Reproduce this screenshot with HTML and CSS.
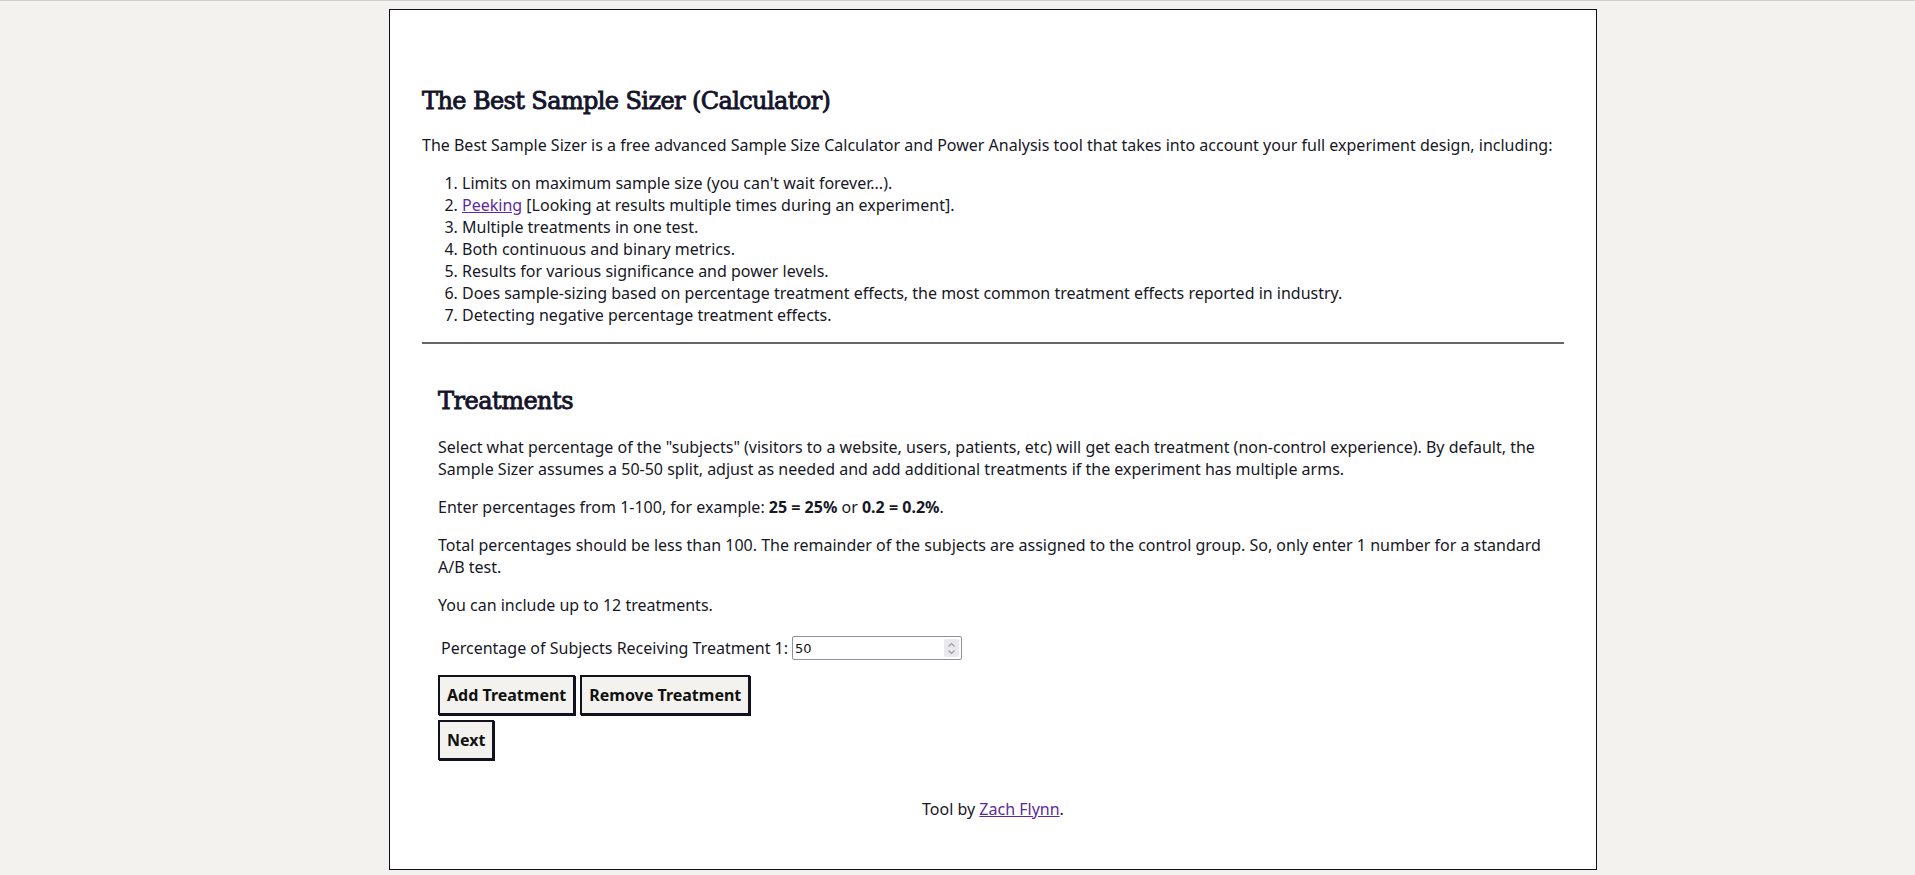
FILE: index.html
```html
<!DOCTYPE html>
<html lang="en">
<head>
<meta charset="utf-8">
<title>The Best Sample Sizer</title>
<link rel="stylesheet" href="styles.css">
</head>
<body>
<main class="page">
  <h1 class="title">The Best Sample Sizer (Calculator)</h1>
  <p class="intro">The Best Sample Sizer is a free advanced Sample Size Calculator and Power Analysis tool that takes into account your full experiment design, including:</p>
  <ol class="features">
    <li>Limits on maximum sample size (you can't wait forever...).</li>
    <li><a href="#" class="link">Peeking</a> [Looking at results multiple times during an experiment].</li>
    <li>Multiple treatments in one test.</li>
    <li>Both continuous and binary metrics.</li>
    <li>Results for various significance and power levels.</li>
    <li>Does sample-sizing based on percentage treatment effects, the most common treatment effects reported in industry.</li>
    <li>Detecting negative percentage treatment effects.</li>
  </ol>
  <hr class="rule">
  <section class="treatments">
    <h2 class="section-title">Treatments</h2>
    <p class="text">Select what percentage of the "subjects" (visitors to a website, users, patients, etc) will get each treatment (non-control experience). By default, the Sample Sizer assumes a 50-50 split, adjust as needed and add additional treatments if the experiment has multiple arms.</p>
    <p class="text">Enter percentages from 1-100, for example: <b>25 = 25%</b> or <b>0.2 = 0.2%</b>.</p>
    <p class="text">Total percentages should be less than 100. The remainder of the subjects are assigned to the control group. So, only enter 1 number for a standard A/B test.</p>
    <p class="text">You can include up to 12 treatments.</p>
    <div class="field">
      <label class="field-label" for="t1">Percentage of Subjects Receiving Treatment 1:</label>
      <span class="num-input">
        <input id="t1" class="num" type="text" value="50">
        <span class="spin">
          <svg width="9" height="13" viewBox="0 0 9 13"><path d="M1.5 4.5 L4.5 1.5 L7.5 4.5" fill="none" stroke="#9a9aa2" stroke-width="1.2"/><path d="M1.5 8.5 L4.5 11.5 L7.5 8.5" fill="none" stroke="#9a9aa2" stroke-width="1.2"/></svg>
        </span>
      </span>
    </div>
    <div class="btn-row">
      <button class="btn">Add Treatment</button>
      <button class="btn">Remove Treatment</button>
    </div>
    <div class="btn-row">
      <button class="btn">Next</button>
    </div>
  </section>
  <p class="footer">Tool by <a href="#" class="link">Zach Flynn</a>.</p>
</main>
</body>
</html>
```

FILE: styles.css
```css
html {
  background: #f3f2ee;
  border-top: 1px solid #d3d1cc;
}
body {
  margin: 8px 0 0 389px;
  font-family: "Noto Sans", "DejaVu Sans", sans-serif;
  font-size: 16px;
  line-height: 22px;
  color: #171726;
}
.page {
  width: 1142px;
  height: 795px;
  background: #fff;
  border: 1px solid #10101c;
  padding: 32px;
}
.title {
  font-family: "DejaVu Serif", serif;
  font-size: 24px;
  line-height: 30px;
  font-weight: 400;
  -webkit-text-stroke: 0.9px #14142a;
  letter-spacing: -0.6px;
  margin: 44px 0 18px;
  color: #14142a;
}
.intro { margin: 0 0 16px; }
.features {
  margin: 0;
  padding-left: 40px;
}
.link { color: #5b2aa0; }
.rule {
  border: 0;
  border-top: 2px solid #666;
  margin: 16px 0 0;
}
.treatments {
  padding: 0 16px;
}
.section-title {
  font-family: "DejaVu Serif", serif;
  font-size: 24px;
  line-height: 30px;
  font-weight: 400;
  -webkit-text-stroke: 0.9px #14142a;
  letter-spacing: -0.5px;
  margin: 42px 0 20px;
  color: #14142a;
}
.text { margin: 0 0 16px; }
.field {
  display: flex;
  align-items: center;
  gap: 4px;
  padding-left: 3px;
  margin-top: 20px;
}
.num-input {
  position: relative;
  display: inline-flex;
}
.num {
  width: 170px;
  height: 24px;
  box-sizing: border-box;
  border: 1px solid #8f8f9d;
  border-radius: 2px;
  padding: 1px 2px;
  font-family: "DejaVu Sans", sans-serif;
  font-size: 13px;
  color: #111;
}
.spin {
  position: absolute;
  right: 3px;
  top: 3px;
  width: 15px;
  height: 18px;
  background: #e9e9ed;
  border-radius: 2px;
  display: flex;
  align-items: center;
  justify-content: center;
}
.btn-row {
  display: flex;
  gap: 5px;
  margin-top: 5px;
}
.field + .btn-row { margin-top: 15px; }
.btn {
  font-family: "Noto Sans", sans-serif;
  font-weight: 700;
  font-size: 16px;
  line-height: 22px;
  padding: 7px 7px;
  background: #f3f2ee;
  color: #111;
  border: 2px solid #12121e;
  border-radius: 0;
  box-shadow: 1px 1px 0 #12121e;
}
.footer {
  text-align: center;
  margin: 38px 0 0;
}
```
